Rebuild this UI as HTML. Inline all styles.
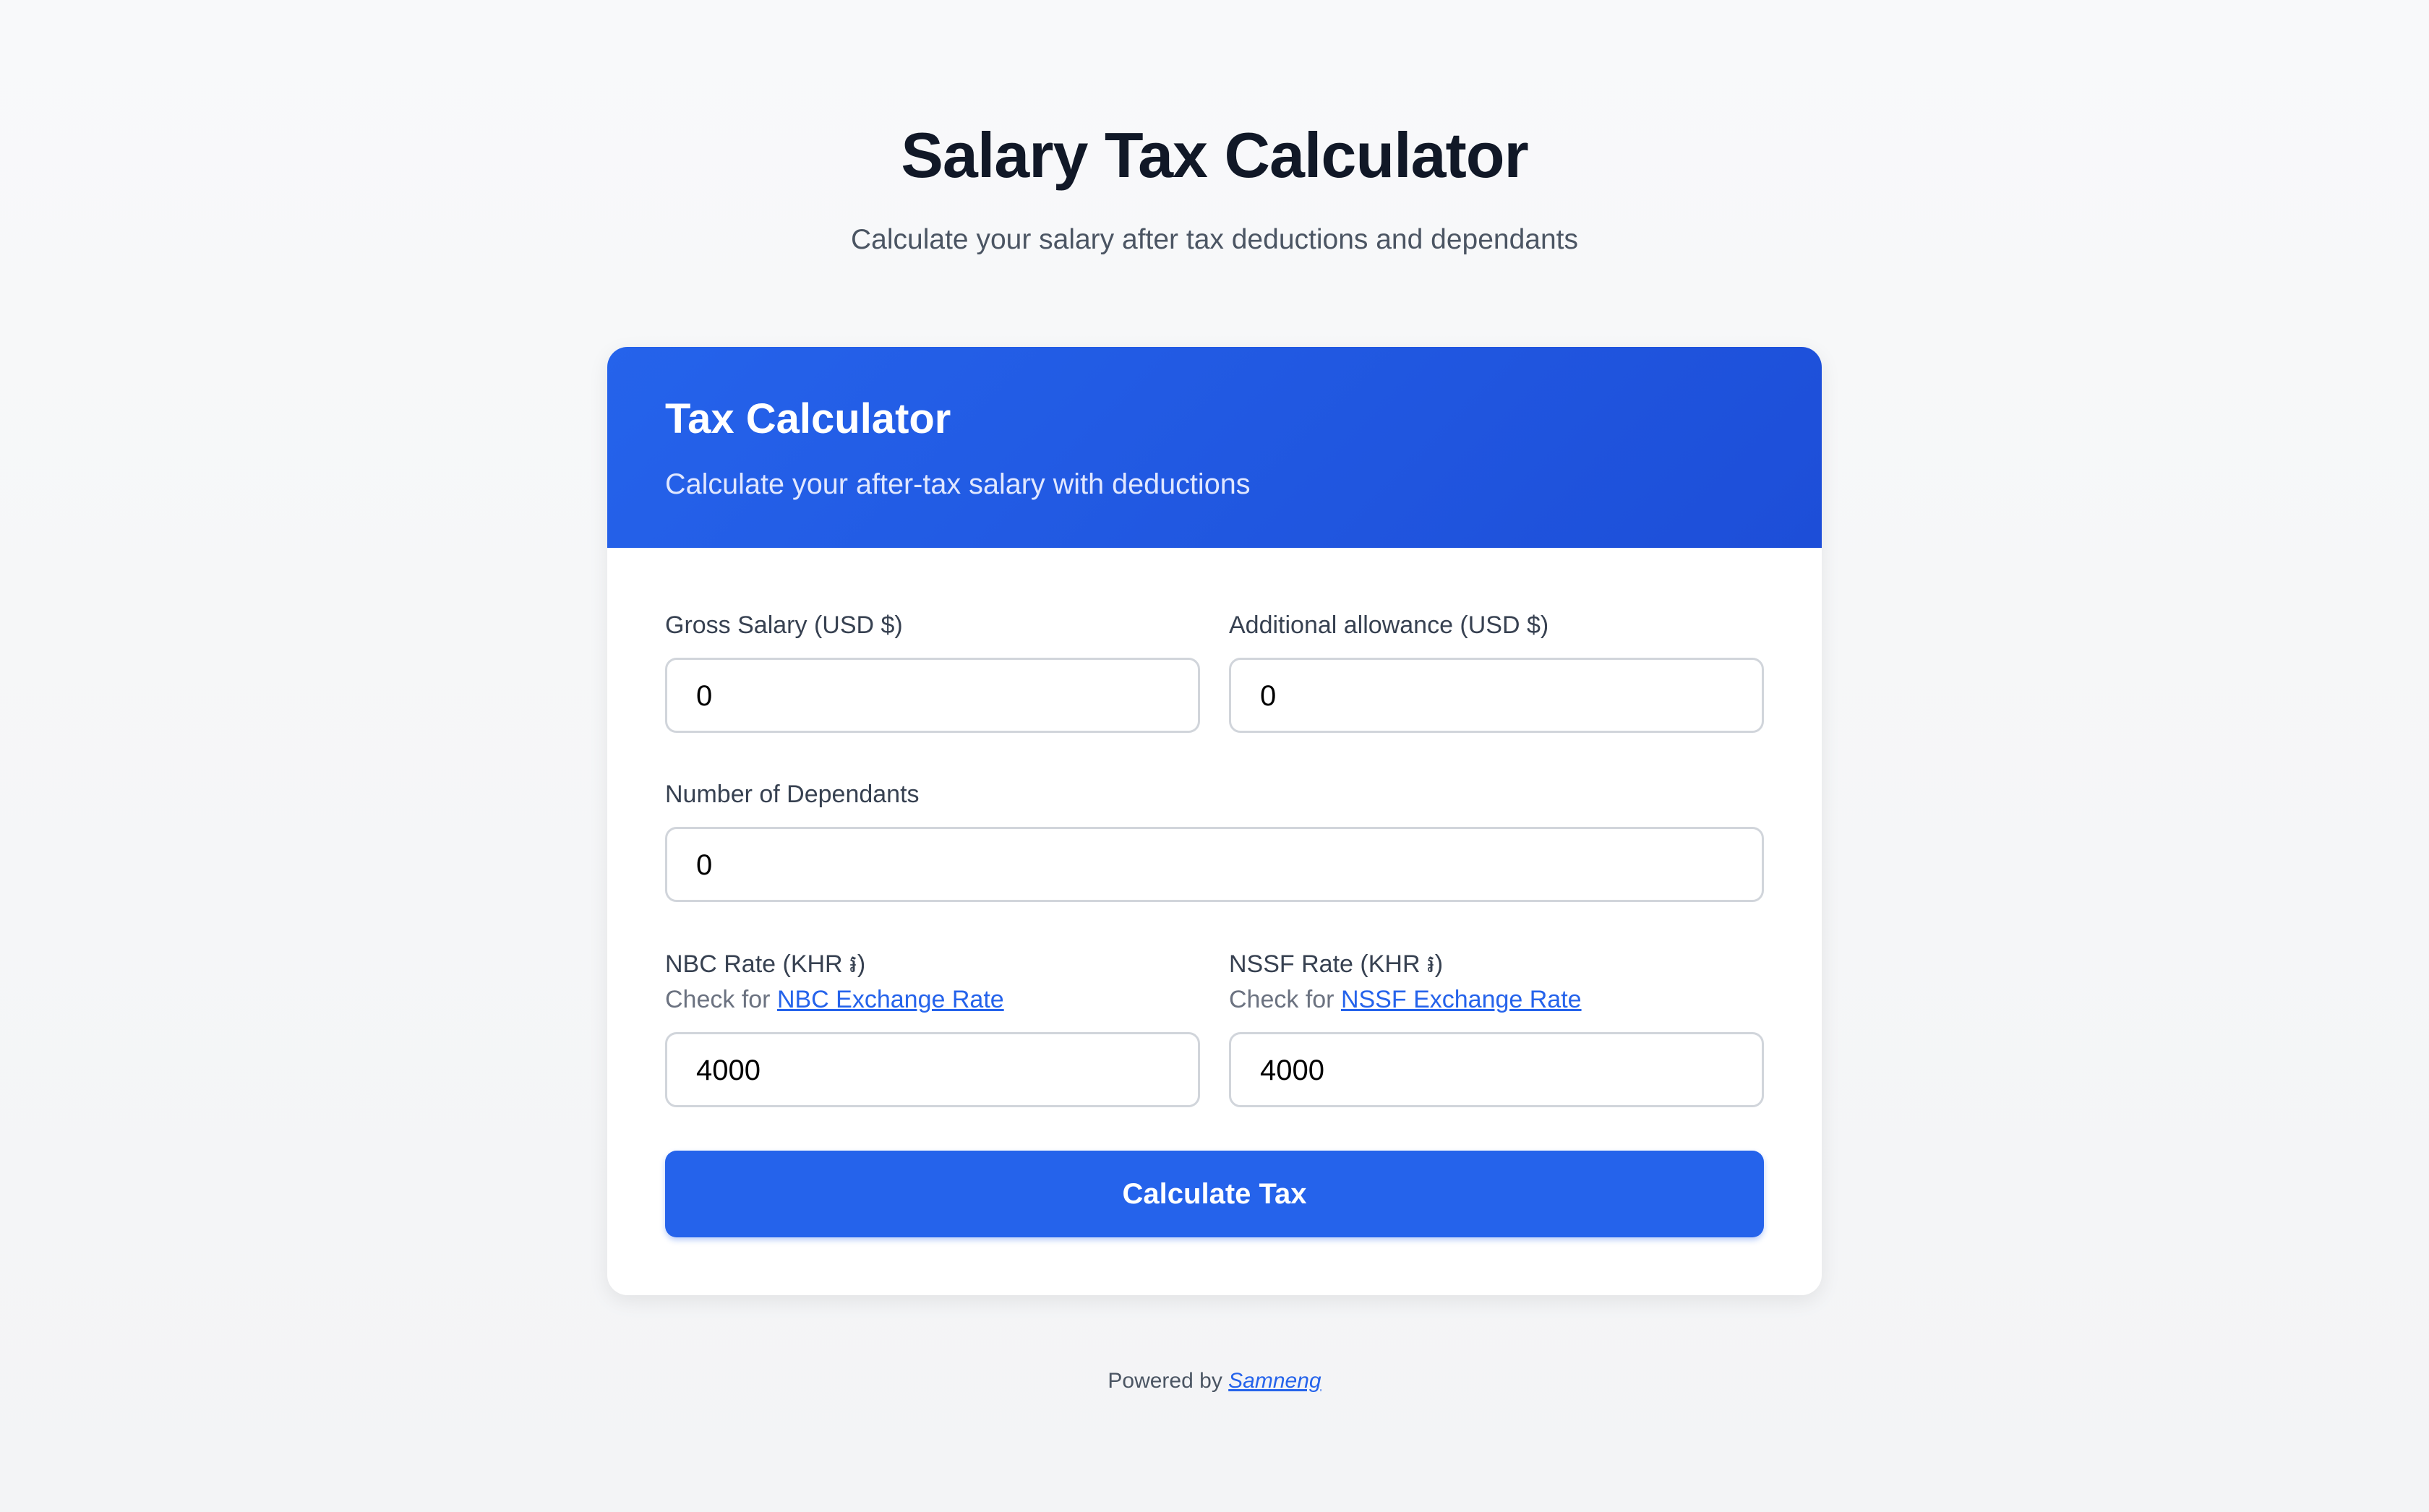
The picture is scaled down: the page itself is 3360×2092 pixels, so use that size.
<!DOCTYPE html>
<html><head><meta charset="utf-8"><style>
html{zoom:2}
*{box-sizing:border-box;margin:0;padding:0}
body{width:1680px;height:1046px;background:linear-gradient(180deg,#f8f9fa,#f3f4f6);font-family:"Liberation Sans","Noto Sans CJK SC",sans-serif;color:#374151;overflow:hidden}
h1{position:absolute;top:82px;width:1680px;text-align:center;font-size:44px;font-weight:bold;color:#111827;letter-spacing:-0.5px}
.sub{position:absolute;top:155px;width:1680px;text-align:center;font-size:19.5px;color:#4b5563}
.card{position:absolute;left:420px;top:240px;width:840px;height:656px;background:#fff;border-radius:14px;box-shadow:0 4px 14px rgba(0,0,0,.08);overflow:hidden}
.hd{height:139px;background:linear-gradient(135deg,#2563eb,#1d4ed8);padding:32px 40px 0;color:#fff}
.hd h2{font-size:29px;font-weight:bold;line-height:36px}
.hd p{font-size:19.8px;margin-top:16px;color:#e0e7ff}
.f{position:absolute;font-size:17px;font-weight:500;color:#374151}
.c{position:absolute;font-size:17px;color:#6b7280}
.c a{color:#2563eb;text-decoration:underline}
.in{position:absolute;height:52px;border:1.5px solid #d1d5db;border-radius:8px;font-size:20px;color:#000;padding:14px 0 0 20px;line-height:22px}
.btn{position:absolute;left:40px;top:556px;width:760px;height:60px;background:#2563eb;border-radius:8px;color:#fff;font-weight:bold;font-size:20px;text-align:center;line-height:60px;box-shadow:0 2px 4px rgba(37,99,235,.3)}
.ft{position:absolute;top:947px;width:1680px;text-align:center;font-size:15px;color:#4b5563}
.ft a{color:#2563eb;font-style:italic;text-decoration:underline}
</style></head><body>
<h1>Salary Tax Calculator</h1>
<div class="sub">Calculate your salary after tax deductions and dependants</div>
<div class="card">
<div class="hd"><h2>Tax Calculator</h2><p>Calculate your after-tax salary with deductions</p></div>
<div class="f" style="left:40px;top:183px">Gross Salary (USD $)</div>
<div class="f" style="left:430px;top:183px">Additional allowance (USD $)</div>
<div class="in" style="left:40px;top:215px;width:370px">0</div>
<div class="in" style="left:430px;top:215px;width:370px">0</div>
<div class="f" style="left:40px;top:300px">Number of Dependants</div>
<div class="in" style="left:40px;top:332px;width:760px">0</div>
<div class="f" style="left:40px;top:416px">NBC Rate (KHR ៛)</div>
<div class="f" style="left:430px;top:416px">NSSF Rate (KHR ៛)</div>
<div class="c" style="left:40px;top:442px">Check for <a>NBC Exchange Rate</a></div>
<div class="c" style="left:430px;top:442px">Check for <a>NSSF Exchange Rate</a></div>
<div class="in" style="left:40px;top:474px;width:370px">4000</div>
<div class="in" style="left:430px;top:474px;width:370px">4000</div>
<div class="btn">Calculate Tax</div>
</div>
<div class="ft">Powered by <a>Samneng</a></div>
</body></html>
